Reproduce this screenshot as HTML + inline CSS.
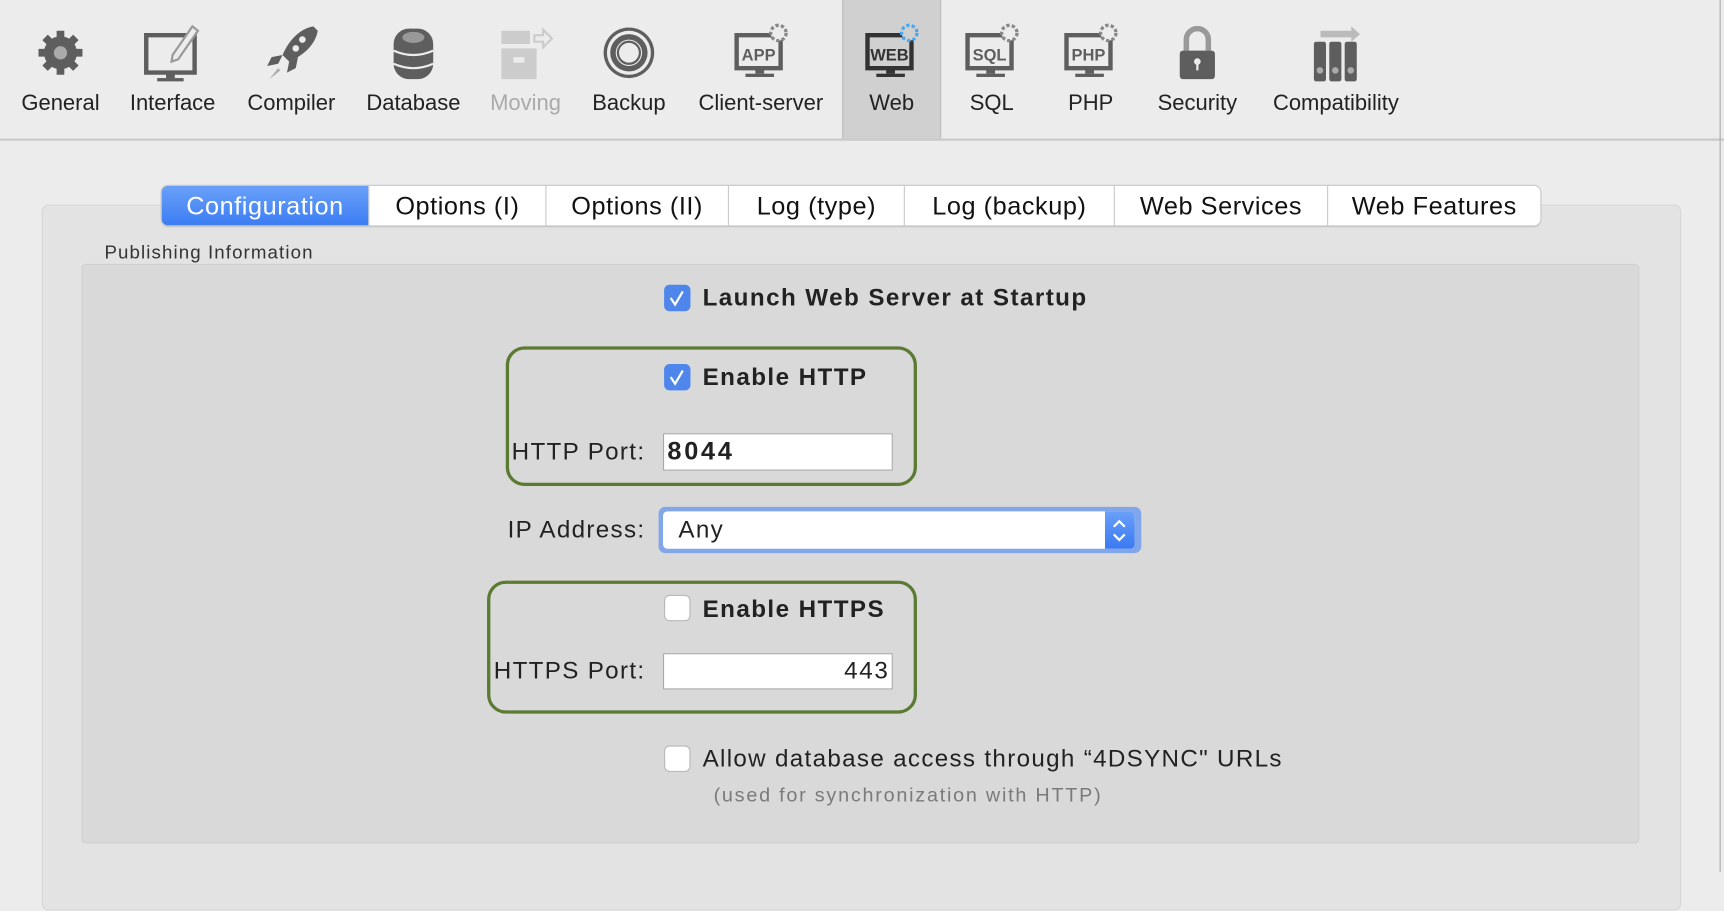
<!DOCTYPE html>
<html><head><meta charset="utf-8"><style>
html,body{margin:0;padding:0;width:1724px;height:872px;overflow:hidden;background:#ececec;font-family:"Liberation Sans",sans-serif;}
#s{position:absolute;left:0;top:0;width:1568px;height:793px;transform:scale(1.09949,1.09962);transform-origin:0 0;}
.a{position:absolute;}
.lbl{position:absolute;top:83px;font-size:20px;color:#222;transform:translateX(-50%);white-space:nowrap;}
.ic{position:absolute;top:20px;width:56px;height:56px;transform:translateX(-50%);}
.tab{position:absolute;top:169px;height:36px;line-height:36px;text-align:center;font-size:23px;letter-spacing:0.5px;color:#111;border-right:1px solid #c8c8c8;box-sizing:border-box;}
.cb{position:absolute;width:24px;height:24px;border-radius:5px;box-sizing:border-box;}
.on{background:#4f86ec;}
.off{background:#fff;border:1px solid #b8b8b8;}
.b{font-weight:bold;font-size:22px;letter-spacing:1.3px;color:#222;position:absolute;white-space:nowrap;}
.r{font-size:22px;letter-spacing:1.2px;color:#222;position:absolute;white-space:nowrap;}
.g{position:absolute;border:3px solid #5b7a32;border-radius:17px;box-sizing:border-box;}
.in{position:absolute;background:#fff;border:1px solid #a8a8a8;box-sizing:border-box;}
</style></head><body><div id="s">
<div class="a" style="left:0;top:0;width:1568px;height:126px;background:#ececec;border-bottom:2px solid #c9c9c9"></div>
<div class="a" style="left:766px;top:0;width:90px;height:126px;background:#d0d0d0;border-left:1px solid #bcbcbc;border-right:1px solid #bcbcbc;box-sizing:border-box"></div>

<svg class="ic" style="left:55px" viewBox="0 0 56 56"><g fill="#5e5e5e"><circle cx="28" cy="28" r="15"/><g stroke="#5e5e5e" stroke-width="7"><line x1="28" y1="8" x2="28" y2="48"/><line x1="8" y1="28" x2="48" y2="28"/><line x1="14" y1="14" x2="42" y2="42"/><line x1="42" y1="14" x2="14" y2="42"/></g></g><circle cx="28" cy="28" r="6" fill="#aaa"/></svg>
<div class="lbl" style="left:55px">General</div>
<svg class="ic" style="left:155px" viewBox="0 0 56 56"><path d="M6 12h44v34H6z" fill="none" stroke="#5e5e5e" stroke-width="4"/><rect x="24" y="46" width="8" height="5" fill="#5e5e5e"/><rect x="16" y="51" width="24" height="3" fill="#5e5e5e"/><path d="M30 30l18-26 5 4-18 26-6 2z" fill="#ececec" stroke="#999" stroke-width="2"/></svg>
<div class="lbl" style="left:157px">Interface</div>
<svg class="ic" style="left:265px" viewBox="0 0 56 56"><path d="M48 4C36 6 26 16 20 30l6 6C40 30 50 20 52 8z" fill="#5e5e5e"/><path d="M20 30l-10 2-4 8 10-2zM26 36l-2 10 8-4 2-10z" fill="#5e5e5e"/><path d="M16 42l-8 10 10-8z" fill="#aaa"/><circle cx="38" cy="16" r="3" fill="#ececec"/><circle cx="32" cy="24" r="3" fill="#ececec"/></svg>
<div class="lbl" style="left:265px">Compiler</div>
<svg class="ic" style="left:376px" viewBox="0 0 56 56"><rect x="10" y="6" width="36" height="46" rx="14" fill="#5e5e5e"/><ellipse cx="28" cy="14" rx="10" ry="5" fill="#999"/><path d="M10 26q18 8 36 0M10 38q18 8 36 0" stroke="#ececec" stroke-width="2" fill="none"/></svg>
<div class="lbl" style="left:376px">Database</div>
<svg class="ic" style="left:478px" viewBox="0 0 56 56"><rect x="6" y="8" width="26" height="12" fill="#ccc"/><rect x="6" y="24" width="32" height="28" fill="#ccc"/><rect x="17" y="32" width="10" height="5" fill="#ececec"/><path d="M36 12h8v-5l8 8-8 8v-5h-8z" fill="none" stroke="#ccc" stroke-width="2"/></svg>
<div class="lbl" style="left:478px;color:#aaa">Moving</div>
<svg class="ic" style="left:572px" viewBox="0 0 56 56"><circle cx="28" cy="28" r="23" fill="#5e5e5e"/><circle cx="28" cy="28" r="20" fill="#ececec"/><circle cx="28" cy="28" r="17" fill="#5e5e5e"/><circle cx="28" cy="28" r="12" fill="#ececec"/><circle cx="28" cy="28" r="10" fill="none" stroke="#5e5e5e" stroke-width="2"/></svg>
<div class="lbl" style="left:572px">Backup</div>
<svg class="ic" style="left:692px" viewBox="0 0 56 56"><path d="M6 12h40v30H6z" fill="none" stroke="#5e5e5e" stroke-width="4"/><rect x="23" y="42" width="8" height="5" fill="#5e5e5e"/><rect x="14" y="47" width="26" height="3" fill="#5e5e5e"/><text x="26" y="35" font-size="15" font-weight="bold" text-anchor="middle" fill="#5e5e5e" font-family="Liberation Sans">APP</text><circle cx="44" cy="10" r="7" fill="#ececec" stroke="#888" stroke-width="3" stroke-dasharray="3 2"/></svg>
<div class="lbl" style="left:692px">Client-server</div>
<svg class="ic" style="left:811px" viewBox="0 0 56 56"><path d="M6 12h40v30H6z" fill="none" stroke="#333" stroke-width="4"/><rect x="23" y="42" width="8" height="5" fill="#333"/><rect x="14" y="47" width="26" height="3" fill="#333"/><text x="26" y="35" font-size="15" font-weight="bold" text-anchor="middle" fill="#333" font-family="Liberation Sans">WEB</text><circle cx="44" cy="10" r="7" fill="#d0d0d0" stroke="#4aa8f0" stroke-width="3" stroke-dasharray="3 2"/></svg>
<div class="lbl" style="left:811px">Web</div>
<svg class="ic" style="left:902px" viewBox="0 0 56 56"><path d="M6 12h40v30H6z" fill="none" stroke="#5e5e5e" stroke-width="4"/><rect x="23" y="42" width="8" height="5" fill="#5e5e5e"/><rect x="14" y="47" width="26" height="3" fill="#5e5e5e"/><text x="26" y="35" font-size="15" font-weight="bold" text-anchor="middle" fill="#5e5e5e" font-family="Liberation Sans">SQL</text><circle cx="44" cy="10" r="7" fill="#ececec" stroke="#888" stroke-width="3" stroke-dasharray="3 2"/></svg>
<div class="lbl" style="left:902px">SQL</div>
<svg class="ic" style="left:992px" viewBox="0 0 56 56"><path d="M6 12h40v30H6z" fill="none" stroke="#5e5e5e" stroke-width="4"/><rect x="23" y="42" width="8" height="5" fill="#5e5e5e"/><rect x="14" y="47" width="26" height="3" fill="#5e5e5e"/><text x="26" y="35" font-size="15" font-weight="bold" text-anchor="middle" fill="#5e5e5e" font-family="Liberation Sans">PHP</text><circle cx="44" cy="10" r="7" fill="#ececec" stroke="#888" stroke-width="3" stroke-dasharray="3 2"/></svg>
<div class="lbl" style="left:992px">PHP</div>
<svg class="ic" style="left:1089px" viewBox="0 0 56 56"><path d="M18 26V16a10 10 0 0 1 20 0v10" fill="none" stroke="#999" stroke-width="5"/><rect x="12" y="26" width="32" height="26" rx="3" fill="#5e5e5e"/><circle cx="28" cy="36" r="3" fill="#ececec"/><rect x="27" y="36" width="2" height="8" fill="#ececec"/></svg>
<div class="lbl" style="left:1089px">Security</div>
<svg class="ic" style="left:1215px" viewBox="0 0 56 56"><g fill="#5e5e5e"><rect x="8" y="18" width="11" height="36" rx="2"/><rect x="22" y="18" width="11" height="36" rx="2"/><rect x="36" y="18" width="11" height="36" rx="2"/></g><g fill="#aaa"><circle cx="13.5" cy="44" r="3"/><circle cx="27.5" cy="44" r="3"/><circle cx="41.5" cy="44" r="3"/></g><path d="M14 8h28v-4l8 7-8 7v-4H14z" fill="#bbb"/></svg>
<div class="lbl" style="left:1215px">Compatibility</div>

<div class="a" style="left:38px;top:186px;width:1489px;height:640px;background:#e3e3e3;border:1px solid #d7d7d7;border-radius:6px"></div>
<div class="a" style="left:147px;top:169px;width:1254px;height:36px;background:#fff;border-radius:6px;box-shadow:0 0 0 1px #c6c6c6,0 1px 1px #bbb"></div>
<div class="tab" style="left:147px;width:189px;background:linear-gradient(#69a0f8,#3c7df4);color:#fff;border-radius:6px 0 0 6px">Configuration</div>
<div class="tab" style="left:336px;width:161px">Options (I)</div>
<div class="tab" style="left:497px;width:166px">Options (II)</div>
<div class="tab" style="left:663px;width:160px">Log (type)</div>
<div class="tab" style="left:823px;width:191px">Log (backup)</div>
<div class="tab" style="left:1014px;width:194px">Web Services</div>
<div class="tab" style="left:1208px;width:193px;border:0">Web Features</div>
<div class="a" style="left:95px;top:220px;font-size:17px;letter-spacing:1px;color:#333">Publishing Information</div>
<div class="a" style="left:74px;top:240px;width:1417px;height:527px;background:#d9d9d9;border:1px solid #cfcfcf;border-radius:4px;box-sizing:border-box"></div>

<svg class="cb on" style="left:604px;top:259px" viewBox="0 0 24 24"><path d="M6 12l4 6 7-12" stroke="#fff" stroke-width="2" fill="none"/></svg>
<div class="b" style="left:639px;top:258px">Launch Web Server at Startup</div>

<div class="g" style="left:460px;top:315px;width:374px;height:127px"></div>
<svg class="cb on" style="left:604px;top:331px" viewBox="0 0 24 24"><path d="M6 12l4 6 7-12" stroke="#fff" stroke-width="2" fill="none"/></svg>
<div class="b" style="left:639px;top:330px">Enable HTTP</div>
<div class="r" style="right:981px;top:398px">HTTP Port:</div>
<div class="in" style="left:603px;top:394px;width:209px;height:34px"></div>
<div class="b" style="left:607px;top:397px;font-size:23px;letter-spacing:2.5px">8044</div>

<div class="r" style="right:981px;top:469px">IP Address:</div>
<div class="a" style="left:599px;top:461px;width:439px;height:42px;border-radius:6px;background:#82a6ea"></div>
<div class="a" style="left:603px;top:465px;width:429px;height:34px;border-radius:4px;background:#fff"></div>
<div class="a" style="left:1005px;top:465px;width:27px;height:34px;border-radius:0 4px 4px 0;background:linear-gradient(#6aa0f8,#3a7af2)"></div>
<svg class="a" style="left:1005px;top:465px" width="27" height="34" viewBox="0 0 27 34"><path d="M8 14l5-5 5 5M8 21l5 5 5-5" stroke="#fff" stroke-width="2" fill="none"/></svg>
<div class="r" style="left:617px;top:469px">Any</div>

<div class="g" style="left:443px;top:528px;width:391px;height:121px"></div>
<div class="cb off" style="left:604px;top:541px"></div>
<div class="b" style="left:639px;top:541px">Enable HTTPS</div>
<div class="r" style="right:981px;top:597px">HTTPS Port:</div>
<div class="in" style="left:603px;top:594px;width:209px;height:33px"></div>
<div class="r" style="left:603px;width:206px;text-align:right;top:597px;letter-spacing:1.5px">443</div>

<div class="cb off" style="left:604px;top:678px"></div>
<div class="r" style="left:639px;top:677px">Allow database access through “4DSYNC" URLs</div>
<div class="a" style="left:649px;top:713px;font-size:18px;letter-spacing:1.6px;color:#7a7a7a">(used for synchronization with HTTP)</div>

<div class="a" style="left:1564px;top:0;width:1px;height:793px;background:#aaa"></div>
</div></body></html>
